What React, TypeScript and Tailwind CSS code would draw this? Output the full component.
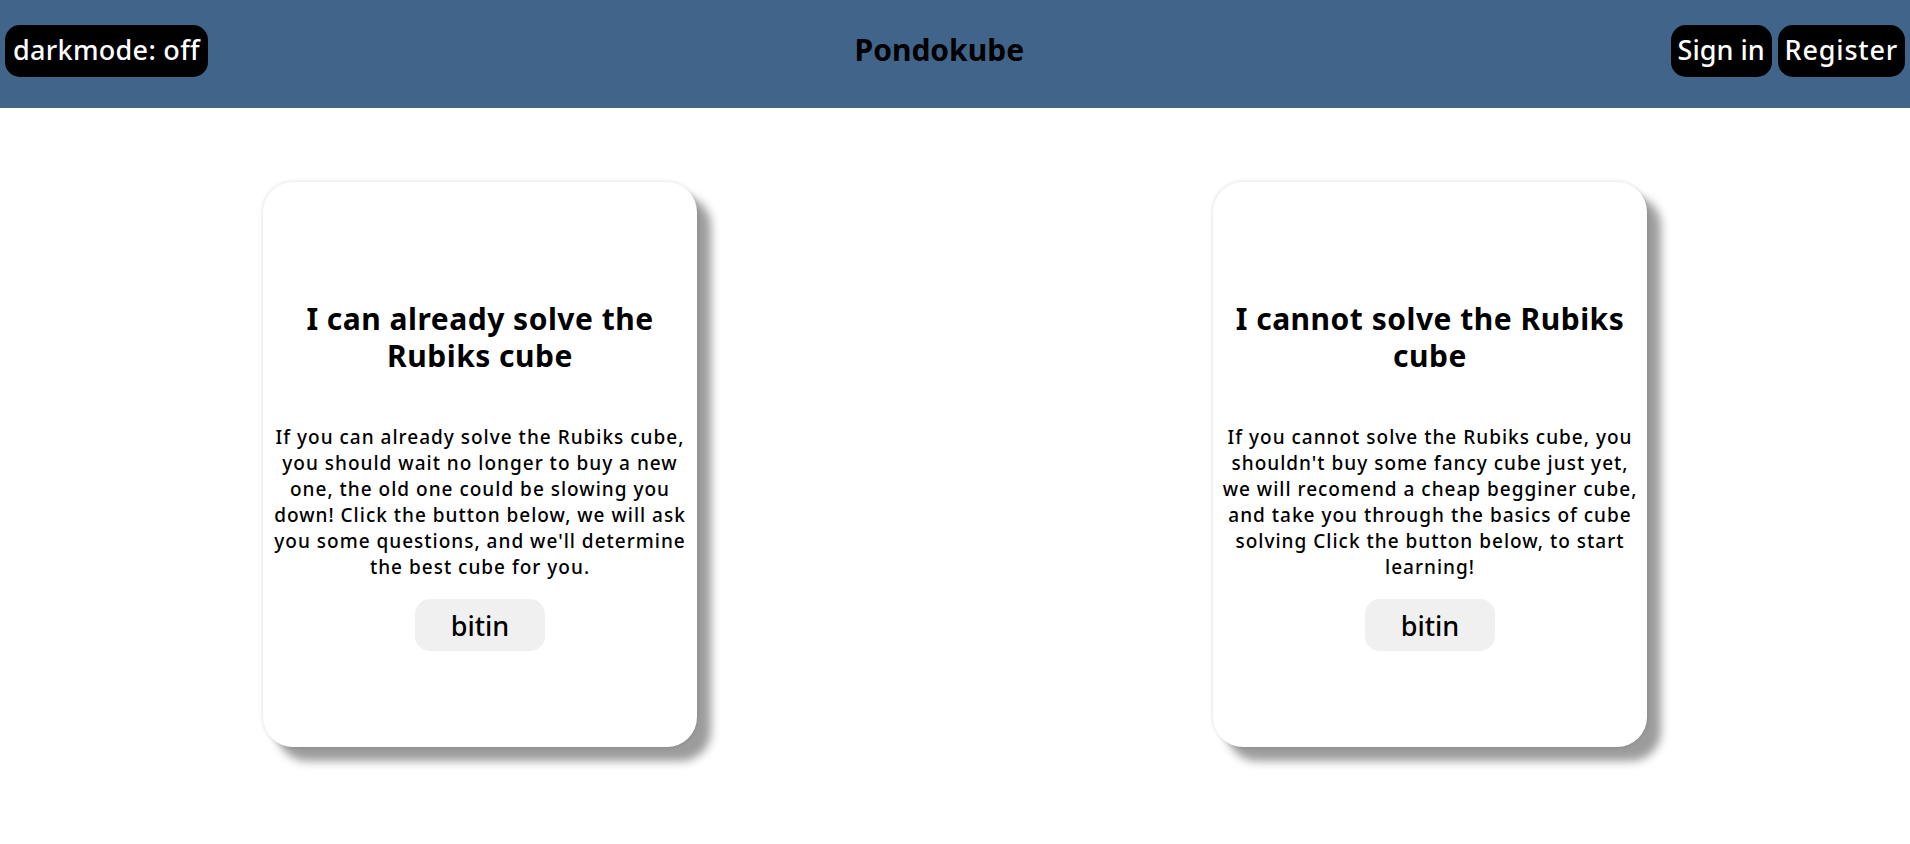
import React from 'react';

interface Choice {
  id: number;
  title: string;
  text: string;
}

// line breaks follow the original page's wrapping
const choices: Choice[] = [
  {
    id: 1,
    title: 'I can already solve the Rubiks cube',
    text: "If you can already solve the Rubiks cube,\nyou should wait no longer to buy a new\none, the old one could be slowing you\ndown! Click the button below, we will ask\nyou some questions, and we'll determine\nthe best cube for you.",
  },
  {
    id: 2,
    title: 'I cannot solve the Rubiks cube',
    text: "If you cannot solve the Rubiks cube, you\nshouldn't buy some fancy cube just yet,\nwe will recomend a cheap begginer cube,\nand take you through the basics of cube\nsolving Click the button below, to start\nlearning!",
  },
];

const font = "font-['Noto_Sans',sans-serif]";

const App: React.FC = () => {
  return (
    <div className={`min-h-screen bg-white text-black ${font}`}>
      <header className="h-[108px] bg-[#41648a] flex items-center justify-between px-[5px] pb-[6px]">
        <button className="h-[52px] px-[8px] pb-[3px] rounded-[15px] bg-black text-white text-[27px] tracking-[0.3px] font-medium leading-none">
          darkmode: off
        </button>
        <h1 className="text-[30px] font-bold leading-none pb-[2px]">Pondokube</h1>
        <div className="flex gap-[6px]">
          <button className="h-[52px] px-[7px] pb-[3px] rounded-[15px] bg-black text-white text-[27px] font-medium leading-none">
            Sign in
          </button>
          <button className="h-[52px] px-[7px] pb-[3px] rounded-[15px] bg-black text-white text-[27px] tracking-[0.8px] font-medium leading-none">
            Register
          </button>
        </div>
      </header>

      <main className="grid grid-cols-2 px-[5px] pt-[74px]">
        {choices.map((c) => (
          <div key={c.id} className="flex justify-center">
            <div className="w-[434px] h-[565px] bg-white rounded-[30px] shadow-[0_0_4px_rgba(0,0,0,0.15),14px_14px_10px_#9c9c9c] flex flex-col items-center text-center px-[5px] pt-[118px]">
              <h2 className="text-[30px] font-bold leading-[37px] tracking-[0.5px] px-[5px]">{c.title}</h2>
              <p className="mt-[50px] text-[19px] leading-[26px] tracking-[1px] font-medium whitespace-pre-line">{c.text}</p>
              <button className="mt-[19px] w-[130px] h-[52px] rounded-[15px] bg-[#f0f0f0] text-[27px] font-medium leading-none">
                bitin
              </button>
            </div>
          </div>
        ))}
      </main>
    </div>
  );
};

export default App;
